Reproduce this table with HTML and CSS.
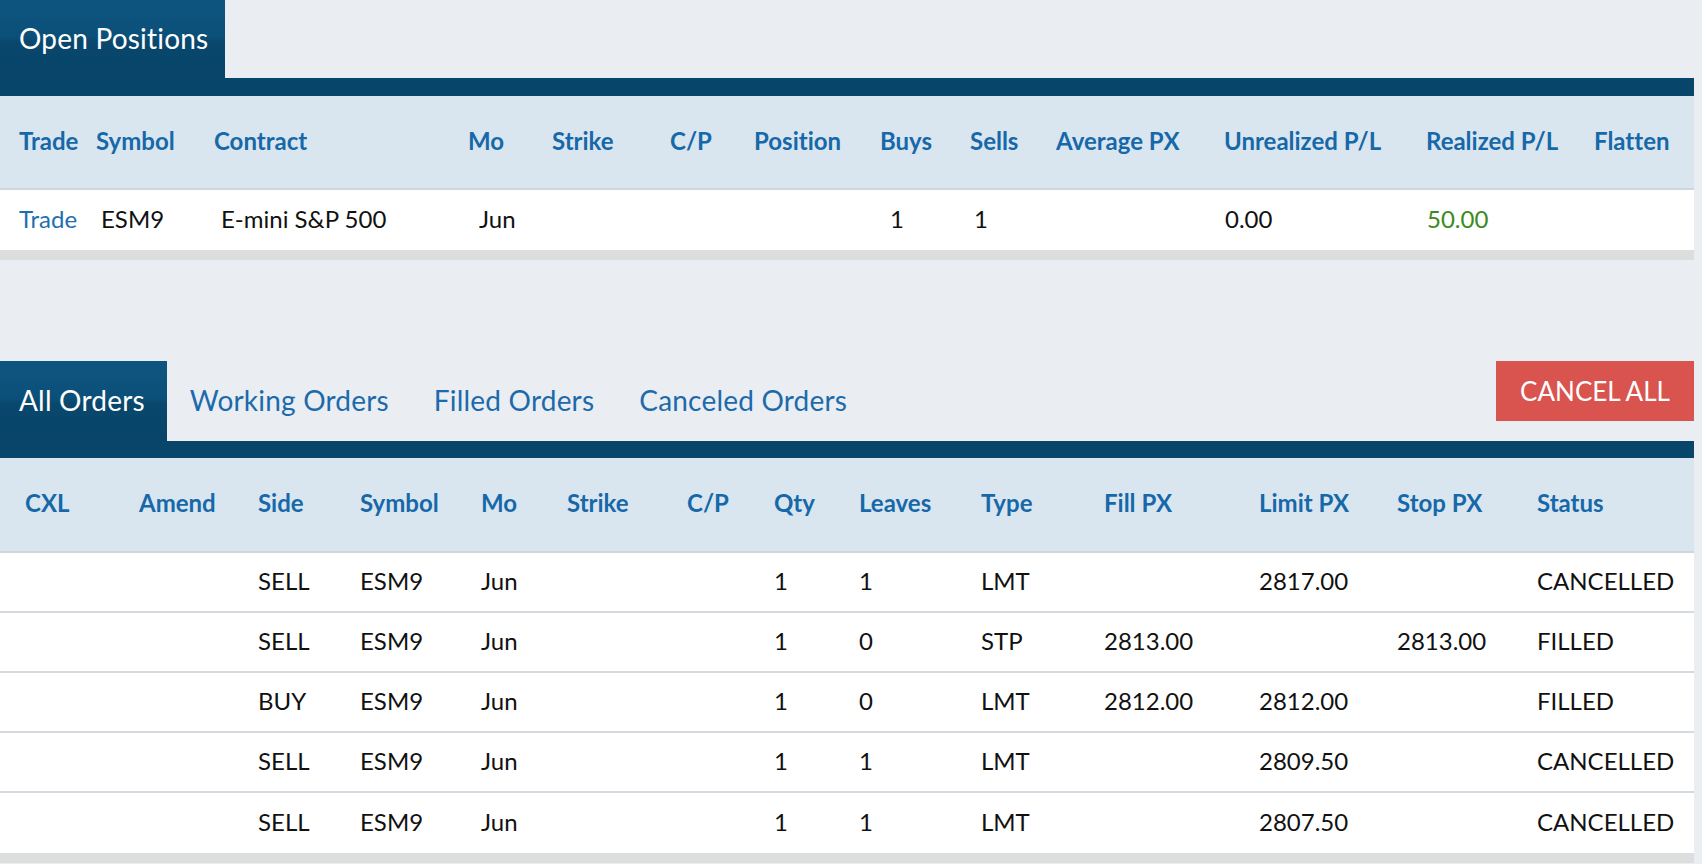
FILE: index.html
```html
<!DOCTYPE html>
<html lang="en">
<head>
<meta charset="utf-8">
<title>Positions and Orders</title>
<link rel="stylesheet" href="styles.css">
</head>
<body>
<div class="page">
  <section class="panel">
    <div class="tabbar">
      <div class="tab active">Open Positions</div>
    </div>
    <div class="strip"></div>
    <div class="head pos-head">
      <div>Trade</div><div>Symbol</div><div>Contract</div><div>Mo</div><div>Strike</div><div>C/P</div><div>Position</div><div>Buys</div><div>Sells</div><div>Average PX</div><div>Unrealized P/L</div><div>Realized P/L</div><div>Flatten</div>
    </div>
    <div class="row pos-row last">
      <div><a class="link">Trade</a></div><div>ESM9</div><div>E-mini S&amp;P 500</div><div>Jun</div><div></div><div></div><div></div><div>1</div><div>1</div><div></div><div>0.00</div><div class="gain">50.00</div><div></div>
    </div>
  </section>

  <section class="panel orders">
    <div class="tabbar tabbar-orders">
      <div class="tab active">All Orders</div>
      <div class="tab">Working Orders</div>
      <div class="tab">Filled Orders</div>
      <div class="tab">Canceled Orders</div>
      <div class="spacer"></div>
      <button class="cancel-all">CANCEL ALL</button>
    </div>
    <div class="strip strip-orders"></div>
    <div class="head ord-head ord-cols">
      <div>CXL</div><div>Amend</div><div>Side</div><div>Symbol</div><div>Mo</div><div>Strike</div><div>C/P</div><div>Qty</div><div>Leaves</div><div>Type</div><div>Fill PX</div><div>Limit PX</div><div>Stop PX</div><div>Status</div>
    </div>
    <div class="row ord-row ord-cols">
      <div></div><div></div><div>SELL</div><div>ESM9</div><div>Jun</div><div></div><div></div><div>1</div><div>1</div><div>LMT</div><div></div><div>2817.00</div><div></div><div>CANCELLED</div>
    </div>
    <div class="row ord-row ord-cols">
      <div></div><div></div><div>SELL</div><div>ESM9</div><div>Jun</div><div></div><div></div><div>1</div><div>0</div><div>STP</div><div>2813.00</div><div></div><div>2813.00</div><div>FILLED</div>
    </div>
    <div class="row ord-row ord-cols">
      <div></div><div></div><div>BUY</div><div>ESM9</div><div>Jun</div><div></div><div></div><div>1</div><div>0</div><div>LMT</div><div>2812.00</div><div>2812.00</div><div></div><div>FILLED</div>
    </div>
    <div class="row ord-row ord-cols">
      <div></div><div></div><div>SELL</div><div>ESM9</div><div>Jun</div><div></div><div></div><div>1</div><div>1</div><div>LMT</div><div></div><div>2809.50</div><div></div><div>CANCELLED</div>
    </div>
    <div class="row ord-row ord-cols last">
      <div></div><div></div><div>SELL</div><div>ESM9</div><div>Jun</div><div></div><div></div><div>1</div><div>1</div><div>LMT</div><div></div><div>2807.50</div><div></div><div>CANCELLED</div>
    </div>
  </section>
</div>
</body>
</html>
```

FILE: styles.css
```css
* { box-sizing: border-box; }

html, body {
  margin: 0;
  padding: 0;
  background: #eaeef2;
  font-family: Lato, "Open Sans", "Liberation Sans", sans-serif;
  font-variant-ligatures: none;
  color: #111;
}

.page {
  width: 1694px;
}

.panel {
  display: flex;
  flex-direction: column;
}

.orders {
  margin-top: 101px;
}

.tabbar {
  display: flex;
  height: 78px;
  align-items: stretch;
}

.tabbar-orders {
  height: 80px;
}

.tab {
  display: flex;
  align-items: center;
  padding: 0 22px 3px 22px;
  font-size: 28px;
  letter-spacing: 0.2px;
  color: #1c6aab;
  white-space: nowrap;
}

.tab.active {
  color: #ffffff;
  background: linear-gradient(to bottom, #0d5580 0%, #0b5079 46%, #09476d 54%, #08446a 100%);
}

.tabbar > .tab:first-child {
  padding-left: 19px;
  padding-right: 17px;
}

.tabbar-orders > .tab:first-child {
  padding-right: 22px;
}

.tabbar-orders > .tab + .tab {
  padding-left: 23px;
  padding-right: 22px;
}

.spacer {
  flex: 1;
}

.cancel-all {
  align-self: flex-start;
  width: 198px;
  height: 60px;
  border: none;
  background: #d9534f;
  color: #ffffff;
  font-family: Lato, "Open Sans", "Liberation Sans", sans-serif;
  font-size: 26px;
  padding: 0;
  cursor: pointer;
}

.strip {
  height: 18px;
  background: #08456a;
}

.strip-orders {
  height: 17px;
}

.head {
  display: grid;
  align-items: center;
  height: 94px;
  padding-bottom: 4px;
  background: #d9e6f0;
  border-bottom: 2px solid #cfd7dd;
  font-size: 24px;
  font-weight: 700;
  color: #1768a8;
  white-space: nowrap;
}

.ord-head {
  height: 95px;
}

.row {
  display: grid;
  align-items: center;
  height: 60px;
  padding-bottom: 4px;
  background: #ffffff;
  font-size: 24px;
  color: #111;
  white-space: nowrap;
}

.ord-row {
  border-bottom: 2px solid #d4dadf;
}

.row.last {
  border-bottom: 10px solid #dcdddd;
  height: 70px;
}

.pos-head {
  padding-left: 19px;
  grid-template-columns: 77px 118px 254px 84px 118px 84px 126px 90px 86px 168px 202px 168px 1fr;
}

.pos-row {
  padding-left: 19px;
  grid-template-columns: 82px 120px 258px 84px 118px 84px 125px 84px 86px 165px 202px 172px 1fr;
}

.ord-cols {
  padding-left: 25px;
  grid-template-columns: 114px 119px 102px 121px 86px 120px 87px 85px 122px 123px 155px 138px 140px 1fr;
}

.link {
  color: #1f6fb0;
  cursor: pointer;
}

.gain {
  color: #3a8a1c;
}
```
